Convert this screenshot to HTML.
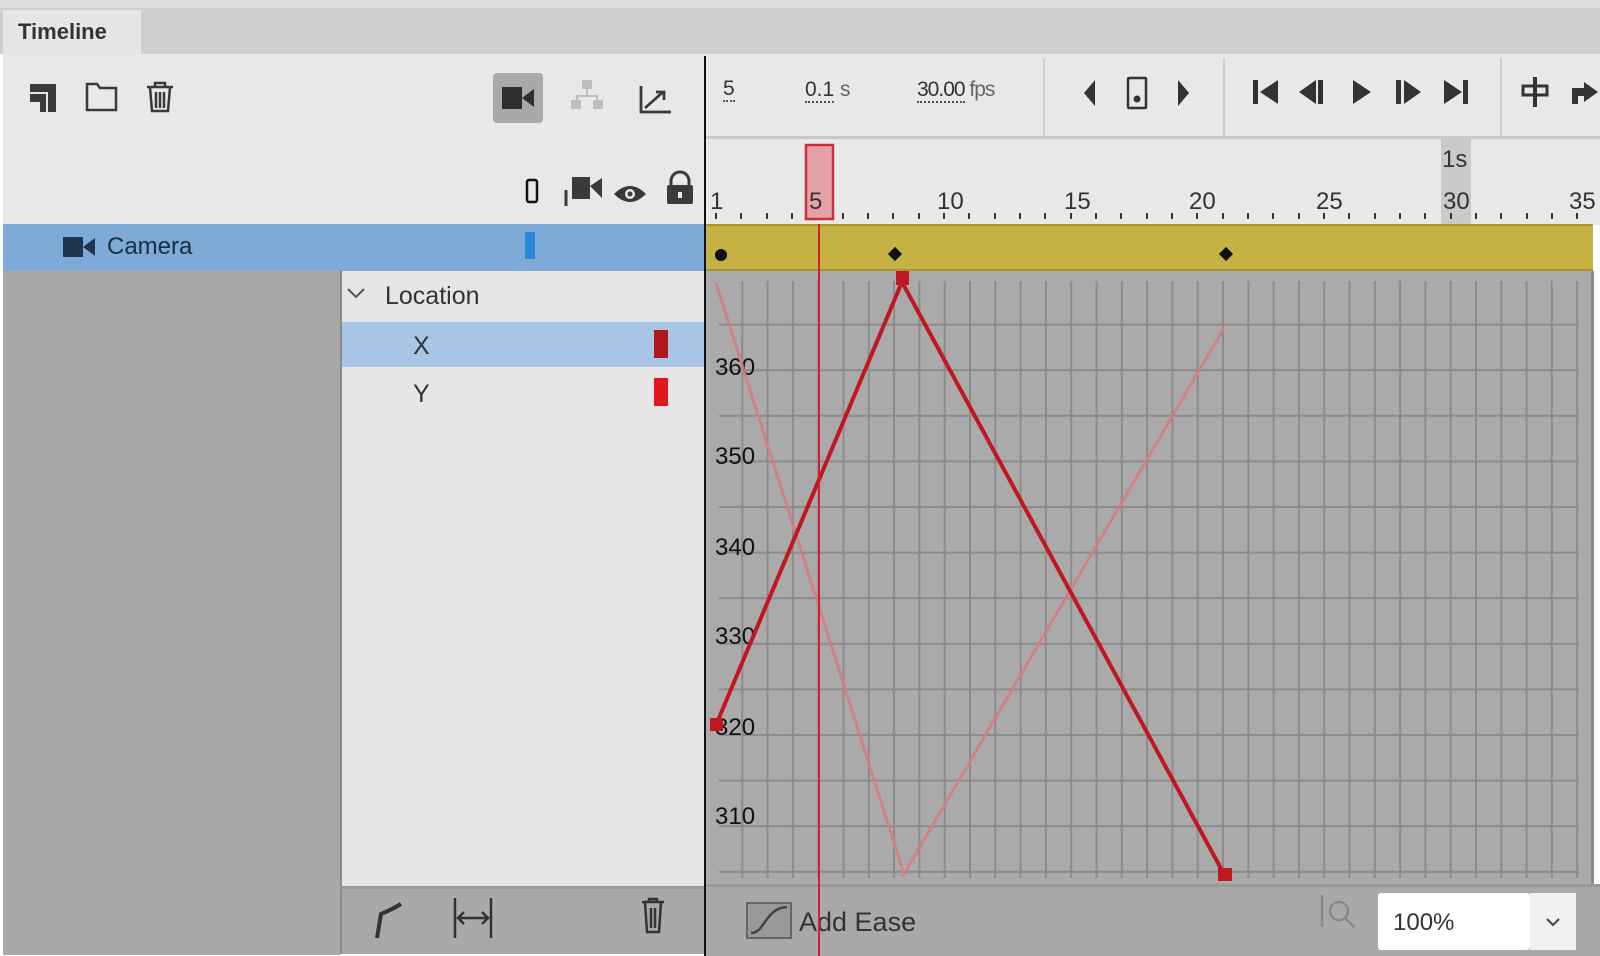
<!DOCTYPE html>
<html><head><meta charset="utf-8"><style>
*{margin:0;padding:0;box-sizing:border-box}
body{width:1600px;height:956px;overflow:hidden;background:#fff;font-family:"Liberation Sans",sans-serif;position:relative;color:#2a2a2a}
.a{position:absolute}
</style></head><body>
<div class="a" style="left:0;top:0;width:1600px;height:8px;background:#dcdcdc"></div>
<div class="a" style="left:0;top:8px;width:1600px;height:46px;background:#cfcfcf"></div>
<div class="a" style="left:3px;top:10px;width:138px;height:44px;background:#e6e6e6"></div>
<div class="a" style="left:18px;top:19px;font-size:22px;font-weight:bold;color:#333">Timeline</div>
<div class="a" style="left:3px;top:54px;width:1597px;height:171px;background:#e8e8e8"></div>
<div class="a" style="left:705px;top:136px;width:895px;height:3px;background:#c9c9c9"></div>
<div class="a" style="left:1043px;top:58px;width:2px;height:78px;background:#cfcfcf"></div>
<div class="a" style="left:1223px;top:58px;width:2px;height:78px;background:#cfcfcf"></div>
<div class="a" style="left:1500px;top:58px;width:2px;height:78px;background:#cfcfcf"></div>
<svg class="a" style="left:0;top:54px" width="705" height="170">
<g fill="#3a3a3a">
<path d="M30 30h26v28h-8v-20h-18z"/><path d="M30 40h16v18h-6v-10h-10z"/>
</g>
<path d="M87 30h10l3 4h16v22h-29z" fill="none" stroke="#3a3a3a" stroke-width="2.5"/>
<g fill="none" stroke="#3a3a3a" stroke-width="2.5"><path d="M147 33h26M155 33v-4h10v4M150 33l2 24h16l2-24M156 38v16M160 38v16M164 38v16"/></g>
<rect x="493" y="19" width="50" height="50" rx="4" fill="#a9a9a9"/>
<path d="M502 33h20v22h-20zM522 44l12-9v18z" fill="#2f2f2f"/>
<g fill="#bdbdbd"><rect x="582" y="26" width="10" height="9"/><rect x="571" y="46" width="10" height="9"/><rect x="593" y="46" width="10" height="9"/><path d="M586 35h2v6h10v5h-2v-3h-18v3h-2v-5h10z"/></g>
<path d="M641 32v26h30M645 54l18-16M656 38h8v8" fill="none" stroke="#3a3a3a" stroke-width="2.8"/>
<rect x="527" y="126" width="10" height="22" rx="2" fill="none" stroke="#111" stroke-width="2.5"/>
<path d="M572 123h18v22h-18zM590 132l12-8v20z" fill="#3a3a3a"/><path d="M566 136v16" stroke="#3a3a3a" stroke-width="3"/>
<path d="M614 140q16-16 32 0q-16 16-32 0z" fill="#3a3a3a"/><circle cx="630" cy="140" r="5" fill="#e8e8e8"/><circle cx="630" cy="140" r="2.5" fill="#3a3a3a"/>
<path d="M671 131v-4a9 9 0 0 1 18 0v4" fill="none" stroke="#3a3a3a" stroke-width="3"/><rect x="667" y="131" width="26" height="19" rx="2" fill="#3a3a3a"/><rect x="678" y="138" width="4" height="6" fill="#e8e8e8"/>
</svg>
<div class="a" style="left:723px;top:78px;font-size:21px;color:#333;border-bottom:2px dotted #555;line-height:22px">5</div>
<div class="a" style="left:805px;top:78px;font-size:21px;color:#333"><span style="border-bottom:2px dotted #555">0.1</span> <span style="color:#666">s</span></div>
<div class="a" style="left:917px;top:78px;font-size:21px;color:#333;letter-spacing:-1px"><span style="border-bottom:2px dotted #555">30.00</span> <span style="color:#666">fps</span></div>
<svg class="a" style="left:1060px;top:70px" width="540" height="50">
<g fill="#333">
<path d="M35 10l-11 13 11 13z"/><rect x="68" y="8" width="18" height="30" rx="1" fill="none" stroke="#333" stroke-width="2.5"/><circle cx="77" cy="29" r="3.5"/><path d="M118 10l11 13-11 13z"/>
<rect x="193" y="10" width="5" height="24"/><path d="M218 10l-18 12 18 12z"/>
<path d="M256 10l-17 12 17 12z"/><rect x="258" y="10" width="5" height="24"/>
<path d="M293 10l18 12-18 12z"/>
<rect x="336" y="10" width="5" height="24"/><path d="M344 10l17 12-17 12z"/>
<path d="M384 10l18 12-18 12z"/><rect x="403" y="10" width="5" height="24"/>
<rect x="463" y="16" width="24" height="9" fill="none" stroke="#333" stroke-width="3"/><rect x="473" y="7" width="4" height="30"/>
<path d="M512 18h12v-6l14 10-14 10v-6h-6v8h-6z"/>
</g></svg>
<svg class="a" style="left:705px;top:139px" width="895" height="86">
<rect x="736" y="0" width="30" height="86" fill="#cacaca"/>
<g font-size="24" fill="#333" font-family="Liberation Sans">
<text x="5" y="70">1</text><text x="232" y="70">10</text><text x="359" y="70">15</text><text x="484" y="70">20</text><text x="611" y="70">25</text><text x="738" y="70">30</text><text x="864" y="70">35</text><text x="737" y="28">1s</text>
</g>
<path d="M11 74v6M36 74v6M62 74v6M87 74v6M112 74v6M138 74v6M163 74v6M188 74v6M214 74v6M239 74v6M264 74v6M290 74v6M315 74v6M340 74v6M366 74v6M391 74v6M416 74v6M442 74v6M467 74v6M492 74v6M518 74v6M543 74v6M568 74v6M594 74v6M619 74v6M644 74v6M670 74v6M695 74v6M720 74v6M746 74v6M771 74v6M796 74v6M822 74v6M847 74v6M872 74v6" stroke="#333" stroke-width="2"/>
<rect x="101" y="6" width="27" height="74" fill="#e4a2a8" stroke="#c83038" stroke-width="2.5"/>
<text x="104" y="70" font-size="24" fill="#333" font-family="Liberation Sans">5</text>
</svg>
<div class="a" style="left:3px;top:224px;width:702px;height:47px;background:#7eaad8"></div>
<svg class="a" style="left:60px;top:234px" width="40" height="26"><path d="M3 3h20v20h-20zM23 13l12-9v18z" fill="#1f3550"/></svg>
<div class="a" style="left:107px;top:233px;font-size:24px;color:#1d2d40">Camera</div>
<div class="a" style="left:525px;top:232px;width:10px;height:27px;background:#2b8ad8"></div>
<div class="a" style="left:705px;top:224px;width:888px;height:47px;background:#c6b144;border-top:2px solid #a99430;border-bottom:2px solid #a99430"></div>
<div class="a" style="left:715px;top:249px;width:12px;height:12px;border-radius:50%;background:#111"></div>
<div class="a" style="left:890px;top:249px;width:10px;height:10px;background:#111;transform:rotate(45deg)"></div>
<div class="a" style="left:1221px;top:249px;width:10px;height:10px;background:#111;transform:rotate(45deg)"></div>
<div class="a" style="left:3px;top:271px;width:337px;height:684px;background:#a9a9a9"></div>
<div class="a" style="left:340px;top:271px;width:365px;height:615px;background:#e6e6e6;border-left:2px solid #8a8a8a"></div>
<svg class="a" style="left:345px;top:285px" width="24" height="16"><path d="M3 4l8 8 8-8" fill="none" stroke="#555" stroke-width="2"/></svg>
<div class="a" style="left:385px;top:282px;font-size:25px;color:#333">Location</div>
<div class="a" style="left:342px;top:322px;width:363px;height:45px;background:#a9c5e6"></div>
<div class="a" style="left:413px;top:332px;font-size:25px;color:#333">X</div>
<div class="a" style="left:654px;top:330px;width:14px;height:28px;background:#b0161c"></div>
<div class="a" style="left:413px;top:380px;font-size:25px;color:#333">Y</div>
<div class="a" style="left:654px;top:378px;width:14px;height:28px;background:#e0181e"></div>
<svg class="a" style="left:705px;top:271px" width="895" height="685">
<defs><pattern id="g" patternUnits="userSpaceOnUse" x="11" y="7" width="25.3" height="45.6"><rect width="25.3" height="45.6" fill="#aaaaaa"/><path d="M1 0v45.6M0 1h25.3" stroke="#8c8c8c" stroke-width="2"/></pattern></defs>
<rect x="0" y="0" width="888" height="615" fill="#aaaaaa"/>
<rect x="14" y="10" width="860" height="597" fill="url(#g)"/>
<rect x="874" y="0" width="14" height="615" fill="#aaaaaa"/>
<rect x="886" y="0" width="3" height="615" fill="#8c8c8c"/>
<g font-size="24" fill="#111" font-family="Liberation Sans"><text x="10" y="104">360</text><text x="10" y="193">350</text><text x="10" y="284">340</text><text x="10" y="373">330</text><text x="10" y="464">320</text><text x="10" y="553">310</text></g>
<polyline points="11,12 199,603 519,57" fill="none" stroke="#d67c80" stroke-width="3" opacity="0.9"/>
<polyline points="11,454 197,11 519,603" fill="none" stroke="#c01820" stroke-width="4"/>
<rect x="5" y="447" width="13" height="13" fill="#c01820"/>
<rect x="191" y="0" width="13" height="14" fill="#c01820"/>
<rect x="513" y="597" width="14" height="13" fill="#c01820"/>
<rect x="0" y="615" width="895" height="70" fill="#a9a9a9"/>
<rect x="0" y="613" width="895" height="3" fill="#999"/>
<rect x="42" y="632" width="44" height="35" fill="#999" stroke="#666" stroke-width="2"/>
<path d="M46 662c14 0 14-25 36-26" fill="none" stroke="#444" stroke-width="2.5"/>
<text x="94" y="660" font-size="27" fill="#333" font-family="Liberation Sans">Add Ease</text>
<g fill="none" stroke="#8a8a8a" stroke-width="2.5"><circle cx="634" cy="640" r="9"/><path d="M640 647l9 9M617 624v32"/></g>
<rect x="673" y="622" width="152" height="57" rx="3" fill="#fff"/>
<rect x="825" y="622" width="46" height="57" fill="#f0f0f0"/>
<text x="688" y="659" font-size="24" fill="#333" font-family="Liberation Sans">100%</text>
<path d="M842 648l6 6 6-6" fill="none" stroke="#444" stroke-width="2"/>
</svg>
<div class="a" style="left:340px;top:886px;width:365px;height:68px;background:#a9a9a9;border-left:2px solid #8a8a8a;border-top:3px solid #999"></div>
<svg class="a" style="left:340px;top:886px" width="365" height="70">
<path d="M37 52l4-24q10-4 20-10" fill="none" stroke="#333" stroke-width="4"/>
<g stroke="#333" stroke-width="2.5" fill="none"><path d="M115 12v40M151 12v40M119 32h28M124 26l-6 6 6 6M142 26l6 6-6 6"/></g>
<g fill="none" stroke="#333" stroke-width="2.5"><path d="M302 16h22M309 16v-3h8v3M305 16l2 30h12l2-30M311 22v20M315 22v20"/></g>
</svg>
<div class="a" style="left:704px;top:56px;width:2px;height:900px;background:#111"></div>
<div class="a" style="left:818px;top:224px;width:2px;height:732px;background:#d0202a"></div>
</body></html>
